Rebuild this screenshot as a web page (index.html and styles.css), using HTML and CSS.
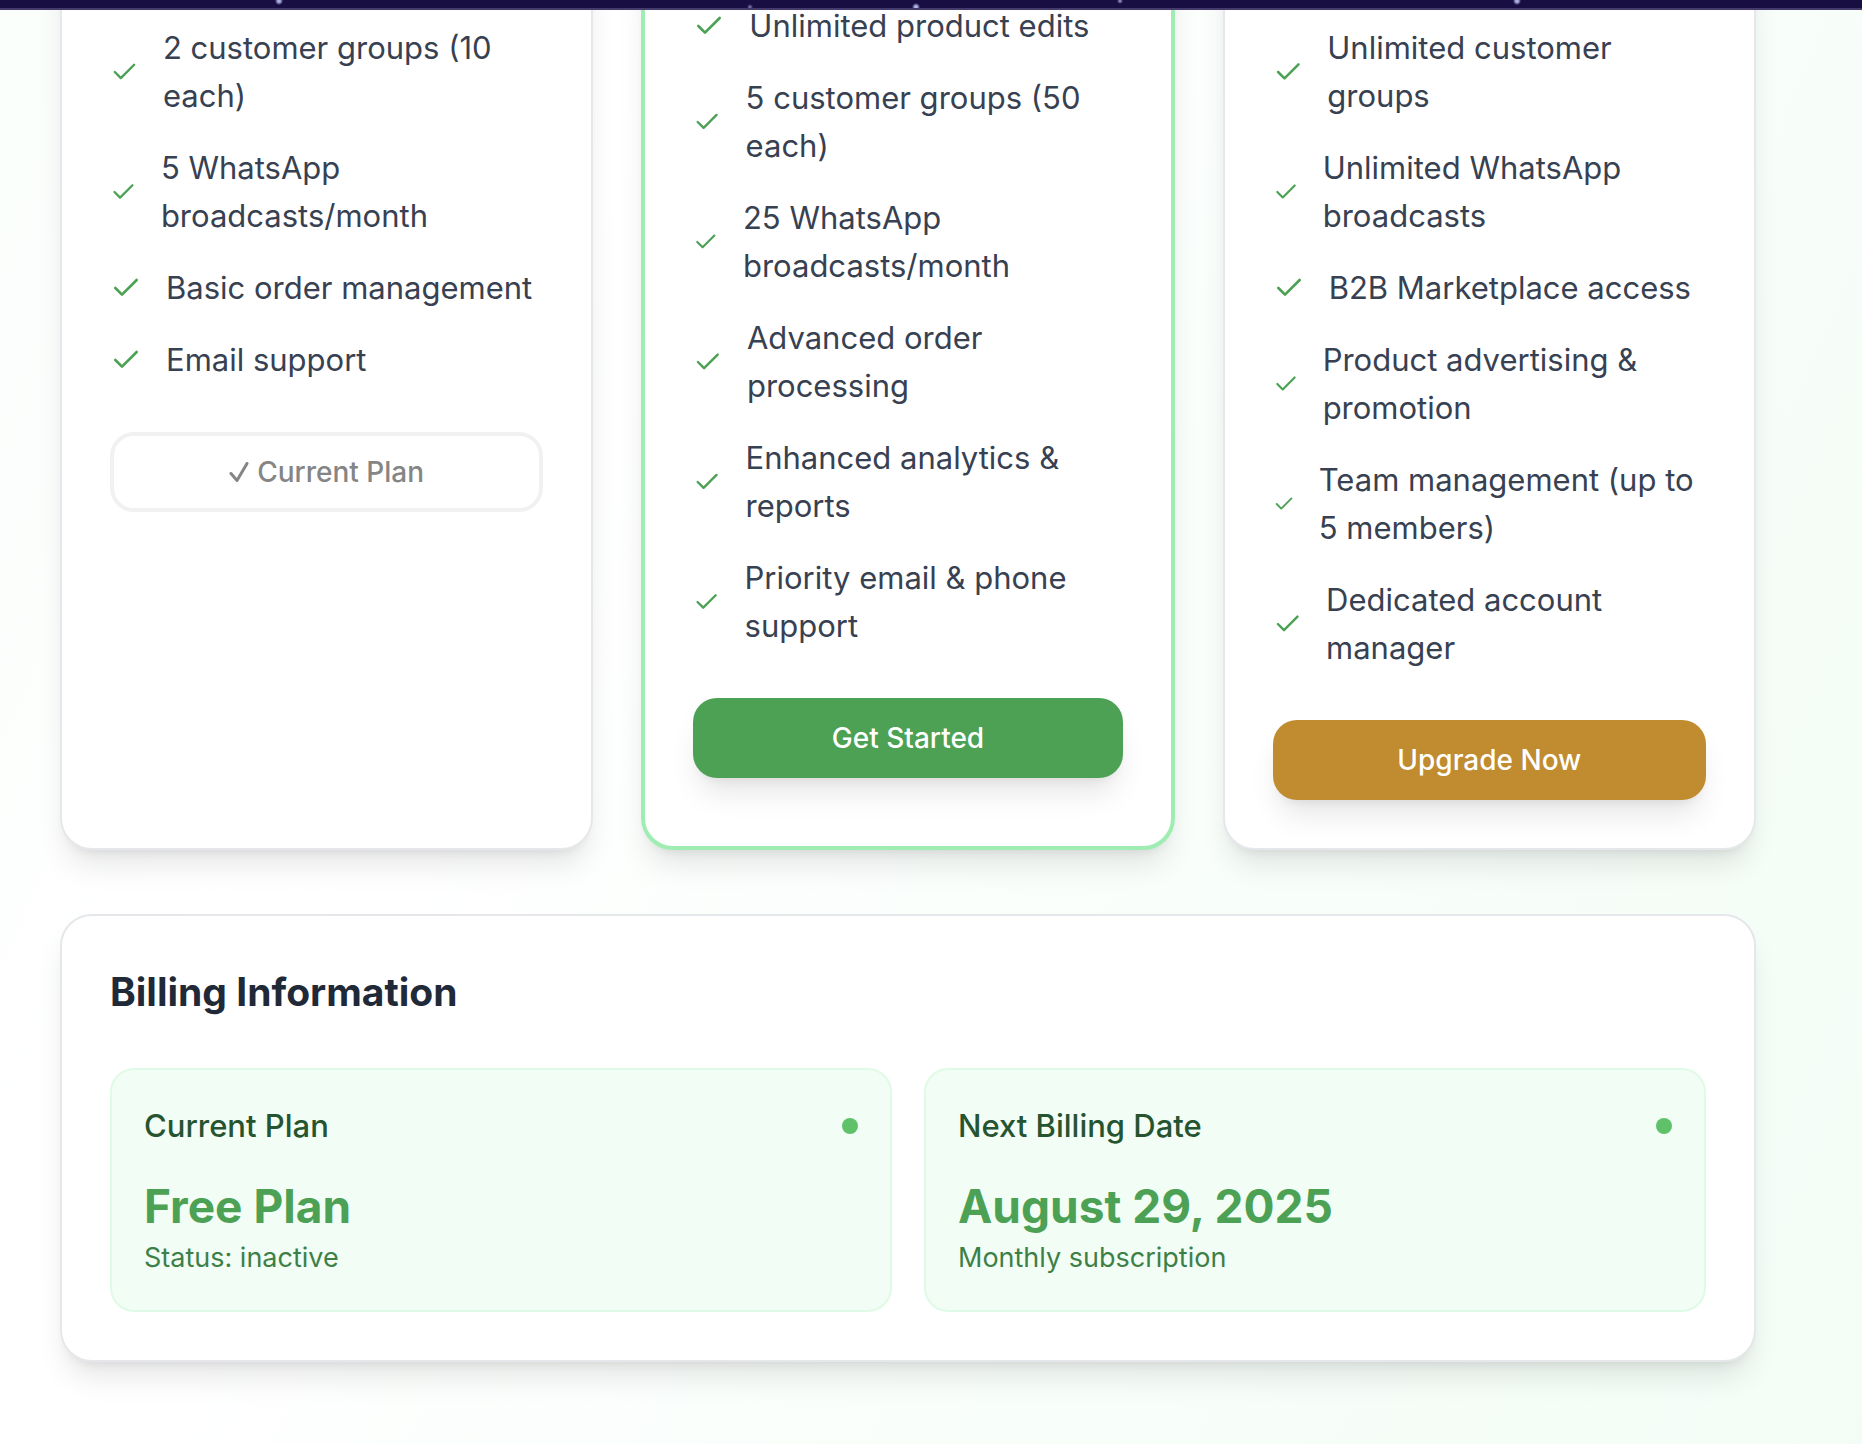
FILE: index.html
```html
<!DOCTYPE html>
<html lang="en">
<head>
<meta charset="utf-8">
<meta name="viewport" content="width=device-width, initial-scale=1">
<title>Subscription</title>
<link rel="stylesheet" href="styles.css">
</head>
<body>
<svg class="defs" aria-hidden="true">
  <symbol id="check" viewBox="0 0 24 24"><path d="M20 6 9 17l-5-5"/></symbol>
</svg>
<header class="topbar"></header>
<main class="page">
  <section class="plans">
    <article class="card plan">
      <ul class="features">
        <li><svg class="check"><use href="#check"/></svg><span>2 customer groups (10 each)</span></li>
        <li><svg class="check"><use href="#check"/></svg><span>5 WhatsApp broadcasts/month</span></li>
        <li><svg class="check"><use href="#check"/></svg><span>Basic order management</span></li>
        <li><svg class="check"><use href="#check"/></svg><span>Email support</span></li>
      </ul>
      <button class="btn btn-outline" type="button" disabled><svg class="tick" viewBox="0 0 20 20" aria-hidden="true"><path d="M2 11.500 8 18.500 18 1.500"/></svg>Current Plan</button>
    </article>
    <article class="card plan plan-popular">
      <ul class="features">
        <li><svg class="check"><use href="#check"/></svg><span>Unlimited product edits</span></li>
        <li><svg class="check"><use href="#check"/></svg><span>5 customer groups (50 each)</span></li>
        <li><svg class="check"><use href="#check"/></svg><span>25 WhatsApp broadcasts/month</span></li>
        <li><svg class="check"><use href="#check"/></svg><span>Advanced order processing</span></li>
        <li><svg class="check"><use href="#check"/></svg><span>Enhanced analytics &amp; reports</span></li>
        <li><svg class="check"><use href="#check"/></svg><span>Priority email &amp; phone support</span></li>
      </ul>
      <button class="btn btn-green" type="button">Get Started</button>
    </article>
    <article class="card plan">
      <ul class="features">
        <li><svg class="check"><use href="#check"/></svg><span>Unlimited customer groups</span></li>
        <li><svg class="check"><use href="#check"/></svg><span>Unlimited WhatsApp broadcasts</span></li>
        <li><svg class="check"><use href="#check"/></svg><span>B2B Marketplace access</span></li>
        <li><svg class="check"><use href="#check"/></svg><span>Product advertising &amp; promotion</span></li>
        <li><svg class="check"><use href="#check"/></svg><span>Team management (up to 5 members)</span></li>
        <li><svg class="check"><use href="#check"/></svg><span>Dedicated account manager</span></li>
      </ul>
      <button class="btn btn-gold" type="button">Upgrade Now</button>
    </article>
  </section>

  <section class="card billing">
    <h2>Billing Information</h2>
    <div class="billing-grid">
      <div class="tile">
        <div class="tile-head"><h3>Current Plan</h3><span class="dot"></span></div>
        <p class="value">Free Plan</p>
        <p class="note">Status: inactive</p>
      </div>
      <div class="tile">
        <div class="tile-head"><h3>Next Billing Date</h3><span class="dot"></span></div>
        <p class="value">August 29, 2025</p>
        <p class="note">Monthly subscription</p>
      </div>
    </div>
  </section>
</main>
</body>
</html>
```
FILE: styles.css
```css
*, *::before, *::after { box-sizing: border-box; }

body {
  margin: 0;
  min-height: 100vh;
  overflow-x: hidden;
  font-family: Inter, "Noto Sans", sans-serif;
  color: #374151;
  background: linear-gradient(114deg, #fafefb 0, #fff 26%, #f3fdf6 100%);
}

h2, h3, p, ul { margin: 0; padding: 0; }

.defs { display: none; }

/* Bottom edge of the night-sky header, fixed over the scrolled page */
.topbar {
  position: fixed;
  inset: 0 0 auto;
  z-index: 10;
  height: 10px;
  border-bottom: 2px solid #443a6b;
  background:
    radial-gradient(circle at 279px 1px, #c9c8ea 0, #8d8bc4 2px, transparent 4px),
    radial-gradient(circle at 750px 7px, #8886ba 0, transparent 3px),
    radial-gradient(circle at 916px 7px, #d5d4f0 0, #8d8bc4 2px, transparent 4px),
    radial-gradient(circle at 1120px 1px, #a9a7d6 0, transparent 3px),
    radial-gradient(circle at 1517px 1px, #c9c8ea 0, #8d8bc4 2px, transparent 4px),
    #180e42;
}

.page { padding: 0 106px 82px 60px; }

.card {
  background: #fff;
  border: 2px solid #e5e7eb;
  border-radius: 32px;
  box-shadow: 0 20px 30px -6px rgba(0, 0, 0, .1), 0 8px 12px -8px rgba(0, 0, 0, .1);
}

/* The tops of the plan cards are scrolled out of view */
.plans {
  display: grid;
  grid-template-columns: repeat(3, 1fr);
  gap: 48px;
  margin-top: -80px;
}

.plan { padding: 102px 48px 48px; }

.plan-popular {
  padding-top: 78px;
  border: 4px solid #9fedb2;
}

.features {
  display: grid;
  gap: 24px;
  margin-bottom: 48px;
  list-style: none;
  font-size: 31px;
  line-height: 48px;
}

.features li { display: flex; align-items: center; }

.check {
  width: 32px;
  min-width: 0;
  height: 32px;
  margin-right: 24px;
  fill: none;
  stroke: #4ca154;
  stroke-width: 2;
  stroke-linecap: round;
  stroke-linejoin: round;
}

.btn {
  display: flex;
  align-items: center;
  justify-content: center;
  gap: 8px;
  width: 100%;
  height: 80px;
  border: 0;
  border-radius: 24px;
  font: 500 28px/40px Inter, "Noto Sans", sans-serif;
  color: #fff;
  box-shadow: 0 20px 30px -6px rgba(0, 0, 0, .1), 0 8px 12px -8px rgba(0, 0, 0, .1);
}

.btn-green { background: #4ca154; }
.btn-gold { background: #c08c2f; }
.btn-outline {
  background: #fff;
  border: 4px solid #f2f1f2;
  color: #858585;
  box-shadow: none;
}

.tick {
  width: 20px;
  height: 20px;
  fill: none;
  stroke: currentColor;
  stroke-width: 3;
  stroke-linecap: round;
  stroke-linejoin: round;
}

.billing { margin-top: 64px; padding: 48px; }

.billing h2 {
  margin-bottom: 48px;
  font-size: 39px;
  line-height: 56px;
  font-weight: 700;
  color: #1f2937;
}

.billing-grid {
  display: grid;
  grid-template-columns: repeat(2, 1fr);
  gap: 32px;
}

.tile {
  padding: 32px;
  background: #f2fdf5;
  border: 2px solid #dffbe7;
  border-radius: 24px;
}

.tile-head {
  display: flex;
  align-items: center;
  justify-content: space-between;
  margin-bottom: 24px;
}

.tile h3 {
  font-size: 31px;
  line-height: 48px;
  font-weight: 500;
  color: #265430;
}

.dot {
  width: 16px;
  height: 16px;
  border-radius: 50%;
  background: #5fc26a;
}

.value {
  font-size: 46px;
  line-height: 64px;
  font-weight: 700;
  color: #4ca154;
}

.note {
  font-size: 27px;
  line-height: 40px;
  color: #3d8047;
}
```
